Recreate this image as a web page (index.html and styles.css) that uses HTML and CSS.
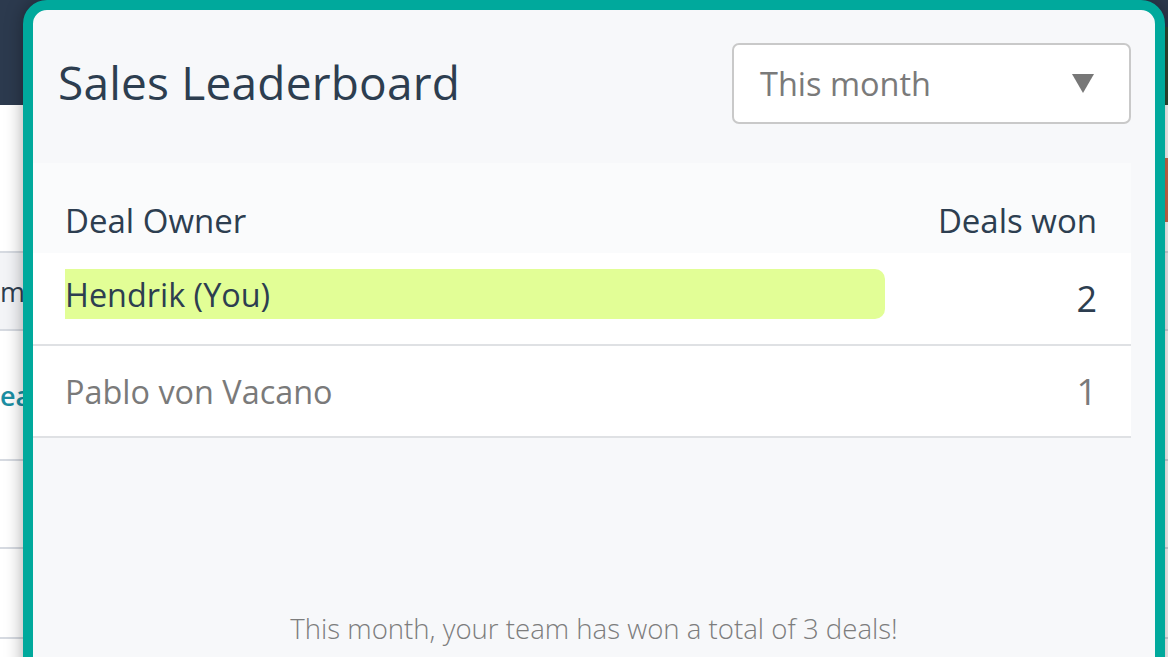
FILE: index.html
```html
<!DOCTYPE html>
<html lang="en">
<head>
    <meta charset="UTF-8">
    <meta name="viewport" content="width=device-width, initial-scale=1.0">
    <title>Sales Leaderboard</title>
    <link rel="stylesheet" href="styles.css">
</head>
<body>
    <div class="page">
        <div class="topbar">
            <div class="avatar"></div>
        </div>
        <div class="toolbar">
            <div class="btn-new"></div>
        </div>
        <ul class="list">
            <li class="shaded"><span>m</span></li>
            <li><span class="link">ea</span></li>
            <li></li>
            <li></li>
            <li></li>
        </ul>
    </div>

    <div class="modal">
        <div class="modal-head">
            <h1>Sales Leaderboard</h1>
            <div class="select">
                <span>This month</span>
                <span class="caret"></span>
            </div>
        </div>
        <div class="board">
            <div class="board-head">
                <div class="owner">Deal Owner</div>
                <div class="won">Deals won</div>
            </div>
            <div class="board-row is-you">
                <div class="owner"><span class="bar">Hendrik (You)</span></div>
                <div class="won">2</div>
            </div>
            <div class="board-row">
                <div class="owner">Pablo von Vacano</div>
                <div class="won">1</div>
            </div>
        </div>
        <p class="total">This month, your team has won a total of 3 deals!</p>
    </div>
</body>
</html>
```

FILE: styles.css
```css
body, ul, li, h1, p{
    margin: 0;
    padding: 0;
    list-style: none;
}
body{
    width: 1168px;
    height: 657px;
    overflow: hidden;
    position: relative;
    background: #fff;
    font-family: "Open Sans", "Noto Sans", sans-serif;
}

/* page behind the modal */
.topbar{
    height: 105px;
    background: #2c3a4e;
    display: flex;
    justify-content: flex-end;
    align-items: flex-end;
}
.avatar{
    width: 60px;
    height: 78px;
    background: #2f4a33;
}
.toolbar{
    height: 146px;
    display: flex;
    justify-content: flex-end;
    align-items: flex-start;
}
.btn-new{
    width: 120px;
    height: 64px;
    margin-top: 53px;
    background: #cf6a4d;
}
.list{
    border-top: 2px solid #d6dae1;
}
.list li{
    height: 76px;
    border-bottom: 2px solid #d6dae1;
    display: flex;
    align-items: center;
    font-size: 27px;
    color: #2d3e50;
}
.list li:nth-child(2){
    height: 128px;
}
.list li:nth-child(3){
    height: 86px;
}
.list li:nth-child(4){
    height: 88px;
}
.list .shaded{
    background: #f3f4f7;
}
.list .link{
    color: #1b8ea3;
    font-weight: 600;
}

/* modal */
.modal{
    position: absolute;
    left: 23px;
    top: 0;
    width: 1122px;
    height: 720px;
    border: 10px solid #00a99c;
    border-radius: 24px;
    background: #f7f8fa;
    box-shadow: 0 0 18px rgba(0,0,0,0.35);
}
.modal-head{
    display: flex;
    justify-content: space-between;
    align-items: center;
    padding: 33px 24px 0 25px;
}
.modal-head h1{
    font-size: 46px;
    font-weight: 400;
    color: #2d3e50;
    letter-spacing: 0.2px;
    margin-bottom: 3px;
}
.select{
    width: 399px;
    height: 81px;
    box-sizing: border-box;
    border: 2px solid #c9c9c9;
    border-radius: 7px;
    background: #fff;
    display: flex;
    justify-content: space-between;
    align-items: center;
    padding: 0 35px 0 26px;
    font-size: 32.5px;
    color: #7a7a7a;
}
.caret{
    width: 0;
    height: 0;
    border-left: 11px solid transparent;
    border-right: 11px solid transparent;
    border-top: 19px solid #777;
}
.board{
    margin: 39px 24px 0 0;
}
.board-head,
.board-row{
    display: flex;
    justify-content: space-between;
    padding: 0 34px 0 32px;
}
.board-head{
    background: #fafbfc;
    padding-top: 38px;
    padding-bottom: 12px;
    line-height: 40px;
    font-size: 33px;
    color: #2d3e50;
}
.board-row{
    height: 92px;
    box-sizing: border-box;
    align-items: center;
    background: #fff;
    border-bottom: 2px solid #dfe1e4;
    font-size: 32.4px;
    color: #7a7a7a;
}
.board-row .won{
    font-size: 36px;
}
.is-you{
    height: 93px;
    color: #2d3e50;
}
.is-you .owner{
    flex: 0 0 820px;
    margin-bottom: 10px;
}
.bar{
    display: block;
    height: 50px;
    line-height: 50px;
    background: #e2fe96;
    border-radius: 0 10px 10px 0;
}
.total{
    margin-top: 172px;
    text-align: center;
    line-height: 36px;
    font-size: 27.6px;
    font-weight: 300;
    color: #7d7d7d;
}
```
